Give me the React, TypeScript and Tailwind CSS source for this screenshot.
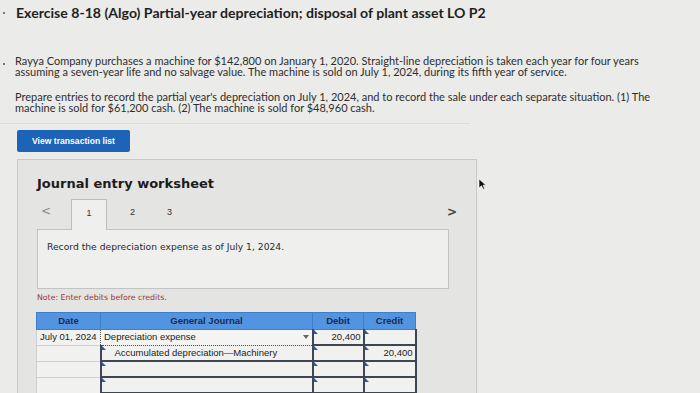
import React from "react";

function Flag() {
  return (
    <span className="absolute left-0 top-0 h-0 w-0 border-l-[4px] border-t-[4px] border-l-[#2d5aa0] border-t-transparent" />
  );
}

export default function App() {
  const rows = [
    { date: "July 01, 2024", account: "Depreciation expense", indent: false, debit: "20,400", credit: "", active: true },
    { date: "", account: "Accumulated depreciation\u2014Machinery", indent: true, debit: "", credit: "20,400", active: false },
    { date: "", account: "", indent: false, debit: "", credit: "", active: false },
    { date: "", account: "", indent: false, debit: "", credit: "", active: false },
  ];

  return (
    <div className="relative h-[393px] w-[700px] overflow-hidden bg-[#ebebea] text-[#2e2e2e] font-['Lato',sans-serif]">
      {/* Title */}
      <div className="flex items-center pl-[3px] pt-[4px]">
        <span className="mr-[11px] h-[2px] w-[2px] rounded-full bg-[#555]" />
        <h1 className="text-[14.1px] font-bold leading-[18px] text-[#1f1f1f]">
          Exercise 8-18 (Algo) Partial-year depreciation; disposal of plant asset LO P2
        </h1>
      </div>

      {/* Problem text */}
      <div className="relative mt-[33px] pl-[15px] pr-[40px] text-[11px] leading-[11px]">
        <span className="absolute left-[3px] top-[8px] h-[2px] w-[2px] rounded-full bg-[#555]" />
        <p>
          Rayya Company purchases a machine for $142,800 on January 1, 2020. Straight-line depreciation is taken each year for four years
          assuming a seven-year life and no salvage value. The machine is sold on July 1, 2024, during its fifth year of service.
        </p>
        <p className="mt-[14px]">
          Prepare entries to record the partial year's depreciation on July 1, 2024, and to record the sale under each separate situation. (1) The
          machine is sold for $61,200 cash. (2) The machine is sold for $48,960 cash.
        </p>
      </div>

      <div className="mt-[10px] h-px w-[470px] bg-[#dcdcdc]" />

      {/* Button */}
      <div className="ml-[17px] mt-[6px] flex h-[22px] w-[113px] items-center justify-center rounded-[2px] bg-[#1d63b8] font-['Liberation_Sans',sans-serif] text-[8.6px] font-bold text-white">
        View transaction list
      </div>

      {/* Worksheet panel */}
      <div className="ml-[17px] mt-[7px] w-[460px] border border-[#c9c9c9] bg-[#e4e4e3] pb-[20px]">
        <h2 className="pl-[19px] pt-[15px] font-['DejaVu_Sans',sans-serif] text-[13px] font-bold leading-[18px] text-[#1c1c1c]">
          Journal entry worksheet
        </h2>

        {/* Tabs */}
        <div className="relative mt-[6px] flex h-[30px] items-stretch pl-[19px] font-['Liberation_Sans',sans-serif] text-[9px] leading-none text-[#333]">
          <span className="ml-[4px] w-[30px] pt-[6px] font-['DejaVu_Sans',sans-serif] text-[12px] text-[#888]">&lt;</span>
          <div className="relative z-10 -mb-px flex w-[36px] justify-center border border-b-0 border-[#bdbdbd] bg-[#efefee] pt-[9px]">
            1
          </div>
          <span className="ml-[23px] w-[37px] pt-[9px]">2</span>
          <span className="pt-[9px]">3</span>
          <span className="absolute left-[429px] top-[7px] font-['DejaVu_Sans',sans-serif] text-[12px] font-bold text-[#444]">&gt;</span>
        </div>
        <div className="ml-[19px] h-[60px] w-[412px] border border-[#c3c3c3] bg-[#efefee] pl-[9px] pt-[10px] font-['DejaVu_Sans',sans-serif] text-[9.2px] text-[#2a2a2a]">
          Record the depreciation expense as of July 1, 2024.
        </div>

        <p className="ml-[19px] mt-[3px] font-['DejaVu_Sans',sans-serif] text-[7.8px] text-[#9a3a32]">
          Note: Enter debits before credits.
        </p>

        {/* Journal table */}
        <table className="ml-[18px] mt-[8px] w-[379px] table-fixed border-collapse font-['Liberation_Sans',sans-serif] text-[9.5px]">
          <colgroup>
            <col className="w-[64px]" />
            <col className="w-[212px]" />
            <col className="w-[51px]" />
            <col className="w-[52px]" />
          </colgroup>
          <thead>
            <tr className="h-[17px] bg-[#5294e0] text-[9.5px] font-bold text-[#1a2a55]">
              <th className="border border-[#3f7ec8]">Date</th>
              <th className="border border-[#3f7ec8]">General Journal</th>
              <th className="border border-[#3f7ec8]">Debit</th>
              <th className="border border-[#3f7ec8]">Credit</th>
            </tr>
          </thead>
          <tbody>
            {rows.map((r, i) => (
              <tr key={i} className="h-[16px]">
                <td className="border-b border-l border-[#cfcfcf] bg-[#f1f1f0] px-[3px] text-[#222]">{r.date}</td>
                <td
                  className={
                    r.active
                      ? "relative border-[1.5px] border-dotted border-[#555] bg-[#f4f4f3] px-[3px] text-[#222]"
                      : "relative border-b-2 border-l-2 border-[#3d4652] bg-[#f1f1f0] px-[3px] text-[#222]"
                  }
                >
                  {!r.active && <Flag />}
                  <span className={r.indent ? "pl-[10px]" : ""}>{r.account}</span>
                  {r.active && (
                    <span className="absolute right-[3px] top-[5px] h-0 w-0 border-x-[3px] border-t-[4px] border-x-transparent border-t-[#666]" />
                  )}
                </td>
                <td className="relative border-b-2 border-l-2 border-[#3d4652] bg-[#f1f1f0] px-[2px] text-right text-[#222]">
                  <Flag />
                  {r.debit}
                </td>
                <td className="relative border-b-2 border-l-2 border-r-2 border-[#3d4652] bg-[#f1f1f0] px-[2px] text-right text-[#222]">
                  <Flag />
                  {r.credit}
                </td>
              </tr>
            ))}
          </tbody>
        </table>
      </div>

      {/* Mouse pointer */}
      <svg className="absolute left-[478px] top-[178px]" width="9" height="12" viewBox="0 0 9 12">
        <path d="M1 1 L1 10 L3.5 7.8 L5.2 11.2 L6.6 10.5 L5 7.2 L8 7.2 Z" fill="#111" stroke="#fff" strokeWidth="0.6" />
      </svg>
    </div>
  );
}
